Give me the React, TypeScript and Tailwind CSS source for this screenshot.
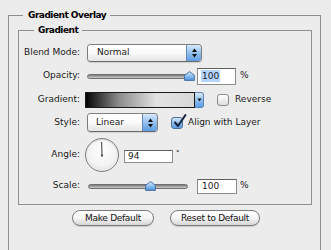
import React from "react";

function UpDown() {
  return (
    <svg width="7" height="10" viewBox="0 0 7 10">
      <path d="M3.5 0.5 L6 4 L1 4 Z" fill="#111" />
      <path d="M3.5 9.5 L6 6 L1 6 Z" fill="#111" />
    </svg>
  );
}

function Select({ label, className, textClass }: { label: string; className: string; textClass: string }) {
  return (
    <div className={"flex h-full rounded-[4px] border border-[#7f7f7f] border-b-[#6a6a6a] overflow-hidden shadow-[0_1px_1px_rgba(0,0,0,0.12)] " + className}>
      <div className={"flex-1 flex items-center bg-linear-to-b from-white via-[#fafafa] to-[#e4e4e4] " + textClass}>{label}</div>
      <div className="w-[15px] flex items-center justify-center border-l border-[#5f87b8] bg-linear-to-b from-[#d8e9fb] via-[#93c0ee] to-[#5d9de4]">
        <UpDown />
      </div>
    </div>
  );
}

function Thumb({ className }: { className: string }) {
  return (
    <svg className={"absolute top-[-3px] " + className} width="11" height="10" viewBox="0 0 11 10">
      <defs>
        <linearGradient id="tg" x1="0" y1="0" x2="0" y2="1">
          <stop offset="0" stopColor="#d7e9fb" />
          <stop offset="0.5" stopColor="#8fc0f0" />
          <stop offset="1" stopColor="#4f92df" />
        </linearGradient>
      </defs>
      <path d="M5.5 0.6 L10.4 4.2 L10.4 9.4 L0.6 9.4 L0.6 4.2 Z" fill="url(#tg)" stroke="#3d6aa0" strokeWidth="0.9" strokeLinejoin="round" />
    </svg>
  );
}

function Track() {
  return <div className="w-full h-[5px] rounded-full border border-[#6f6f6f] bg-linear-to-b from-[#7a7a7a] via-[#a4a4a4] to-[#cfcfcf]" />;
}

export default function App() {
  return (
    <div className="w-[331px] h-[250px] overflow-hidden bg-[#ececec] font-['DejaVu_Sans',sans-serif] text-[9px] text-[#1a1a1a] pt-[10px]">
      <fieldset className="ml-[8px] w-[313px] border border-[#8f8f8f] pb-[80px]">
        <legend className="ml-[14px] pl-[5px] pr-[4px] leading-[11px] font-bold text-black tracking-[-0.5px]">Gradient Overlay</legend>
        <fieldset className="ml-[9px] mt-[4px] w-[294px] border border-[#8f8f8f] pb-[10px]">
          <legend className="ml-[15px] px-[4px] leading-[11px] font-bold text-black tracking-[-0.5px]">Gradient</legend>

          {/* Blend Mode */}
          <div className="flex items-center h-[18px] mt-[8px]">
            <div className="w-[61px] shrink-0 text-right">Blend Mode:</div>
            <Select label="Normal" className="ml-[7px] w-[115px]" textClass="pl-[9px]" />
          </div>

          {/* Opacity */}
          <div className="flex items-center h-[18px] mt-[5px]">
            <div className="w-[61px] shrink-0 text-right">Opacity:</div>
            <div className="relative ml-[7px] w-[106px] flex items-center">
              <Track />
              <Thumb className="left-[97px]" />
            </div>
            <div className="ml-[4px] w-[39px] h-[17px] bg-white border border-[#8c8c8c] border-t-[#5f5f5f] flex items-center pl-[3px]">
              <span className="bg-[#b5d5ff] px-[1px] leading-[12px]">100</span>
            </div>
            <span className="ml-[4px]">%</span>
          </div>

          {/* Gradient */}
          <div className="flex items-center h-[17px] mt-[6px]">
            <div className="w-[61px] shrink-0 text-right">Gradient:</div>
            <div className="ml-[5px] flex h-[16px]">
              <div className="w-[110px] h-full border border-[#1a1a1a] bg-[linear-gradient(to_right,#050505,#8a8a8a_30%,#e2e2e2_65%,#d8d8d8)]" />
              <div className="w-[9px] h-full flex items-center justify-center rounded-r-[3px] border border-l-0 border-[#5f87b8] bg-linear-to-b from-[#d8e9fb] via-[#93c0ee] to-[#5d9de4]">
                <svg width="5" height="4" viewBox="0 0 5 4"><path d="M0.5 0.5 L4.5 0.5 L2.5 3.5 Z" fill="#111" /></svg>
              </div>
            </div>
            <div className="ml-[13px] w-[12px] h-[12px] rounded-[3px] border border-[#8a8a8a] bg-linear-to-b from-white to-[#dedede]" />
            <span className="ml-[6px]">Reverse</span>
          </div>

          {/* Style */}
          <div className="flex items-center h-[19px] mt-[5px]">
            <div className="w-[61px] shrink-0 text-right">Style:</div>
            <Select label="Linear" className="ml-[7px] w-[71px]" textClass="pl-[8px]" />
            <div className="relative ml-[13px] w-[12px] h-[12px] rounded-[3px] border border-[#4d6f99] bg-linear-to-b from-[#d3e6fb] via-[#8fbdee] to-[#5e9de3]">
              <svg className="absolute left-[1px] top-[-4px] overflow-visible" width="14" height="14" viewBox="0 0 14 14">
                <path d="M2 8.5 L5 12 L12.5 1" fill="none" stroke="#15233d" strokeWidth="2" strokeLinecap="round" strokeLinejoin="round" />
              </svg>
            </div>
            <span className="ml-[5px]">Align with Layer</span>
          </div>

          {/* Angle */}
          <div className="flex items-center h-[34px] mt-[6px]">
            <div className="w-[61px] shrink-0 text-right">Angle:</div>
            <div className="ml-[5px] w-[34px] h-[34px] rounded-full border border-[#808080] bg-[radial-gradient(circle_at_50%_40%,#ffffff_0%,#f3f3f3_55%,#d8d8d8_100%)] shadow-[inset_0_1px_1px_rgba(0,0,0,0.15)]">
              <svg width="32" height="32" viewBox="0 0 32 32">
                <line x1="16" y1="16.5" x2="15.6" y2="3" stroke="#4a4a4a" strokeWidth="1.1" />
                <rect x="15" y="15.5" width="2" height="2" fill="#4a4a4a" />
              </svg>
            </div>
            <div className="ml-[5px] mt-[2px] w-[49px] h-[13px] bg-white border border-[#8c8c8c] border-t-[#5f5f5f] flex items-center pl-[3px] leading-[11px]">94</div>
            <span className="self-start mt-[12px] ml-[3px] text-[7px] leading-none">°</span>
          </div>

          {/* Scale */}
          <div className="flex items-center h-[16px] mt-[6px]">
            <div className="w-[61px] shrink-0 text-right">Scale:</div>
            <div className="relative ml-[8px] w-[100px] flex items-center">
              <Track />
              <Thumb className="left-[57px]" />
            </div>
            <div className="ml-[9px] w-[40px] h-[15px] bg-white border border-[#8c8c8c] border-t-[#5f5f5f] flex items-center pl-[4px] leading-[11px]">100</div>
            <span className="ml-[3px]">%</span>
          </div>
        </fieldset>

        <div className="flex justify-center gap-[16px] pl-[3px] mt-[5px]">
          <button className="w-[82px] h-[16px] rounded-full border border-[#7a7a7a] bg-linear-to-b from-white via-[#f5f5f5] to-[#d6d6d6] shadow-[0_1px_1px_rgba(0,0,0,0.15)] text-[9px] leading-[14px] tracking-[-0.3px] text-[#111]">Make Default</button>
          <button className="w-[90px] h-[16px] rounded-full border border-[#7a7a7a] bg-linear-to-b from-white via-[#f5f5f5] to-[#d6d6d6] shadow-[0_1px_1px_rgba(0,0,0,0.15)] text-[9px] leading-[14px] tracking-[-0.3px] text-[#111]">Reset to Default</button>
        </div>
      </fieldset>
    </div>
  );
}
